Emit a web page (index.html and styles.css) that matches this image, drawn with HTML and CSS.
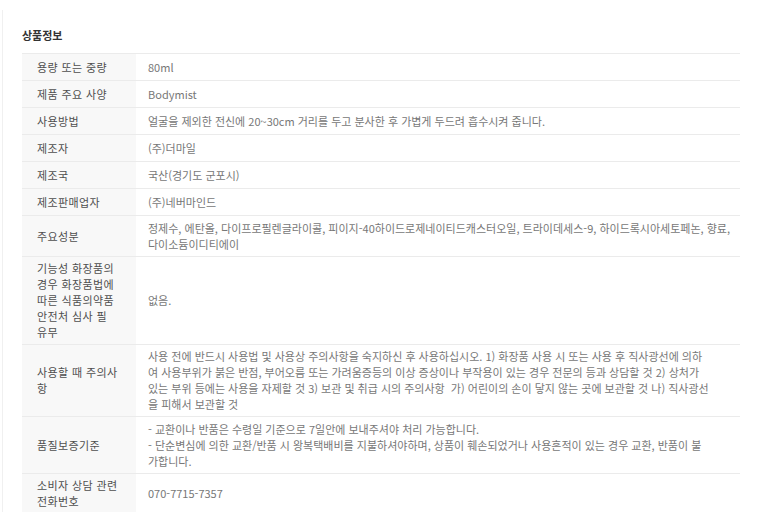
FILE: index.html
```html
<!DOCTYPE html>
<html lang="ko">

<head>
    <meta charset="UTF-8" />
    <meta name="viewport" content="width=device-width, initial-scale=1.0" />
    <title>상품정보</title>
    <link rel="stylesheet" href="styles.css">
</head>

<body>

    <div class="detail">
        <h3 class="detail-title">상품정보</h3>

        <table class="info">
            <tr>
                <th>용량 또는 중량</th>
                <td>80ml</td>
            </tr>
            <tr>
                <th>제품 주요 사양</th>
                <td>Bodymist</td>
            </tr>
            <tr>
                <th>사용방법</th>
                <td>얼굴을 제외한 전신에 20~30cm 거리를 두고 분사한 후 가볍게 두드려 흡수시켜 줍니다.</td>
            </tr>
            <tr>
                <th>제조자</th>
                <td>(주)더마일</td>
            </tr>
            <tr>
                <th>제조국</th>
                <td>국산(경기도 군포시)</td>
            </tr>
            <tr>
                <th>제조판매업자</th>
                <td>(주)네버마인드</td>
            </tr>
            <tr class="mid">
                <th>주요성분</th>
                <td>정제수, 에탄올, 다이프로필렌글라이콜, 피이지-40하이드로제네이티드캐스터오일, 트라이데세스-9, 하이드록시아세토페논, 향료,<br>다이소듐이디티에이</td>
            </tr>
            <tr class="tall">
                <th>기능성 화장품의<br>경우 화장품법에<br>따른 식품의약품<br>안전처 심사 필<br>유무</th>
                <td>없음.</td>
            </tr>
            <tr class="tall">
                <th>사용할 때 주의사<br>항</th>
                <td>사용 전에 반드시 사용법 및 사용상 주의사항을 숙지하신 후 사용하십시오. 1) 화장품 사용 시 또는 사용 후 직사광선에 의하<br>여 사용부위가 붉은 반점, 부어오름 또는 가려움증등의 이상 증상이나 부작용이 있는 경우 전문의 등과 상담할 것 2) 상처가<br>있는 부위 등에는 사용을 자제할 것 3) 보관 및 취급 시의 주의사항 &nbsp;가) 어린이의 손이 닿지 않는 곳에 보관할 것 나) 직사광선<br>을 피해서 보관할 것</td>
            </tr>
            <tr class="mid">
                <th>품질보증기준</th>
                <td>- 교환이나 반품은 수령일 기준으로 7일안에 보내주셔야 처리 가능합니다.<br>- 단순변심에 의한 교환/반품 시 왕복택배비를 지불하셔야하며, 상품이 훼손되었거나 사용흔적이 있는 경우 교환, 반품이 불<br>가합니다.</td>
            </tr>
            <tr class="last">
                <th>소비자 상담 관련<br>전화번호</th>
                <td>070-7715-7357</td>
            </tr>
        </table>
    </div>

</body>

</html>
```

FILE: styles.css
```css
* {
    box-sizing: border-box;
    font-family: 'Noto Sans CJK KR', 'Noto Sans', sans-serif;
}

body {
    margin: 0;
    background-color: white;
}

.detail {
    margin: 10px 0 0 2px;
    border-left: 1px solid #f0f0f0;
    padding: 17px 0 0 19px;
}

.detail-title {
    margin: 0 0 10px;
    font-size: 11px;
    line-height: 16px;
    font-weight: bold;
    color: #333;
}

.info {
    width: 718px;
    border-collapse: collapse;
    table-layout: fixed;
    font-size: 11px;
    line-height: 16px;
    border-top: 1px solid #ebebeb;
}

.info th,
.info td {
    padding: 5px 0;
    border-bottom: 1px solid #ebebeb;
    vertical-align: middle;
    text-align: left;
    white-space: nowrap;
}

.info th {
    width: 114px;
    padding-left: 15px;
    background-color: #f8f8f8;
    font-weight: normal;
    letter-spacing: 0.4px;
    color: #4f4f4f;
}

.info td {
    padding-left: 12px;
    color: #777;
}

.info tr.tall th,
.info tr.tall td {
    padding-top: 3px;
    padding-bottom: 4px;
}

.info tr.mid th,
.info tr.mid td {
    padding-top: 4px;
    padding-bottom: 4px;
}

.info tr.last th,
.info tr.last td {
    padding-top: 3px;
    padding-bottom: 3px;
    border-bottom: none;
}
```
